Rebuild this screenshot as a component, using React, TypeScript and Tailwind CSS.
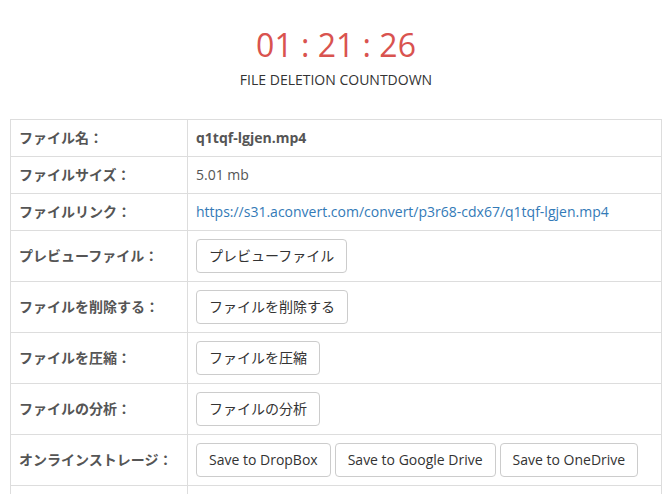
const rows: { label: string; kind: 'bold' | 'text' | 'link' | 'button' | 'storage'; value?: string }[] = [
  { label: 'ファイル名：', kind: 'bold', value: 'q1tqf-lgjen.mp4' },
  { label: 'ファイルサイズ：', kind: 'text', value: '5.01 mb' },
  { label: 'ファイルリンク：', kind: 'link', value: 'https://s31.aconvert.com/convert/p3r68-cdx67/q1tqf-lgjen.mp4' },
  { label: 'プレビューファイル：', kind: 'button', value: 'プレビューファイル' },
  { label: 'ファイルを削除する：', kind: 'button', value: 'ファイルを削除する' },
  { label: 'ファイルを圧縮：', kind: 'button', value: 'ファイルを圧縮' },
  { label: 'ファイルの分析：', kind: 'button', value: 'ファイルの分析' },
  { label: 'オンラインストレージ：', kind: 'storage' },
  { label: '', kind: 'text', value: '' },
]

function Btn({ children }: { children: string }) {
  return (
    <button className="h-[34px] px-3 border border-[#ccc] rounded bg-white text-[14px] text-[#333] leading-5">
      {children}
    </button>
  )
}

export default function App() {
  return (
    <div
      className="w-[672px] h-[494px] overflow-hidden bg-white text-[14px] text-[#333]"
      style={{ fontFamily: '"Open Sans", "Noto Sans CJK JP", sans-serif' }}
    >
      {/* Countdown */}
      <div className="pt-[27px] flex flex-col items-center">
        <div className="text-[32px] leading-[36px] text-[#d9534f]">01 : 21 : 26</div>
        <div className="mt-[7px] text-[14px] leading-5 text-[#333]">FILE DELETION COUNTDOWN</div>
      </div>

      {/* File info table */}
      <table className="mt-[29px] mx-[10px] w-[652px] border-collapse border border-[#ddd]">
        <tbody>
          {rows.map((row, i) => (
            <tr key={i}>
              <td className="w-[177px] h-[37px] border border-[#ddd] px-2 py-2 leading-5 font-bold text-[#555] align-middle whitespace-nowrap">
                {row.label}
              </td>
              <td className="border border-[#ddd] px-2 py-2 leading-5 text-[#555] align-middle">
                {row.kind === 'bold' && <span className="font-bold">{row.value}</span>}
                {row.kind === 'text' && <span>{row.value}</span>}
                {row.kind === 'link' && <span className="text-[#337ab7]">{row.value}</span>}
                {row.kind === 'button' && <Btn>{row.value!}</Btn>}
                {row.kind === 'storage' && (
                  <div className="flex gap-1">
                    <Btn>Save to DropBox</Btn>
                    <Btn>Save to Google Drive</Btn>
                    <Btn>Save to OneDrive</Btn>
                  </div>
                )}
              </td>
            </tr>
          ))}
        </tbody>
      </table>
    </div>
  )
}
